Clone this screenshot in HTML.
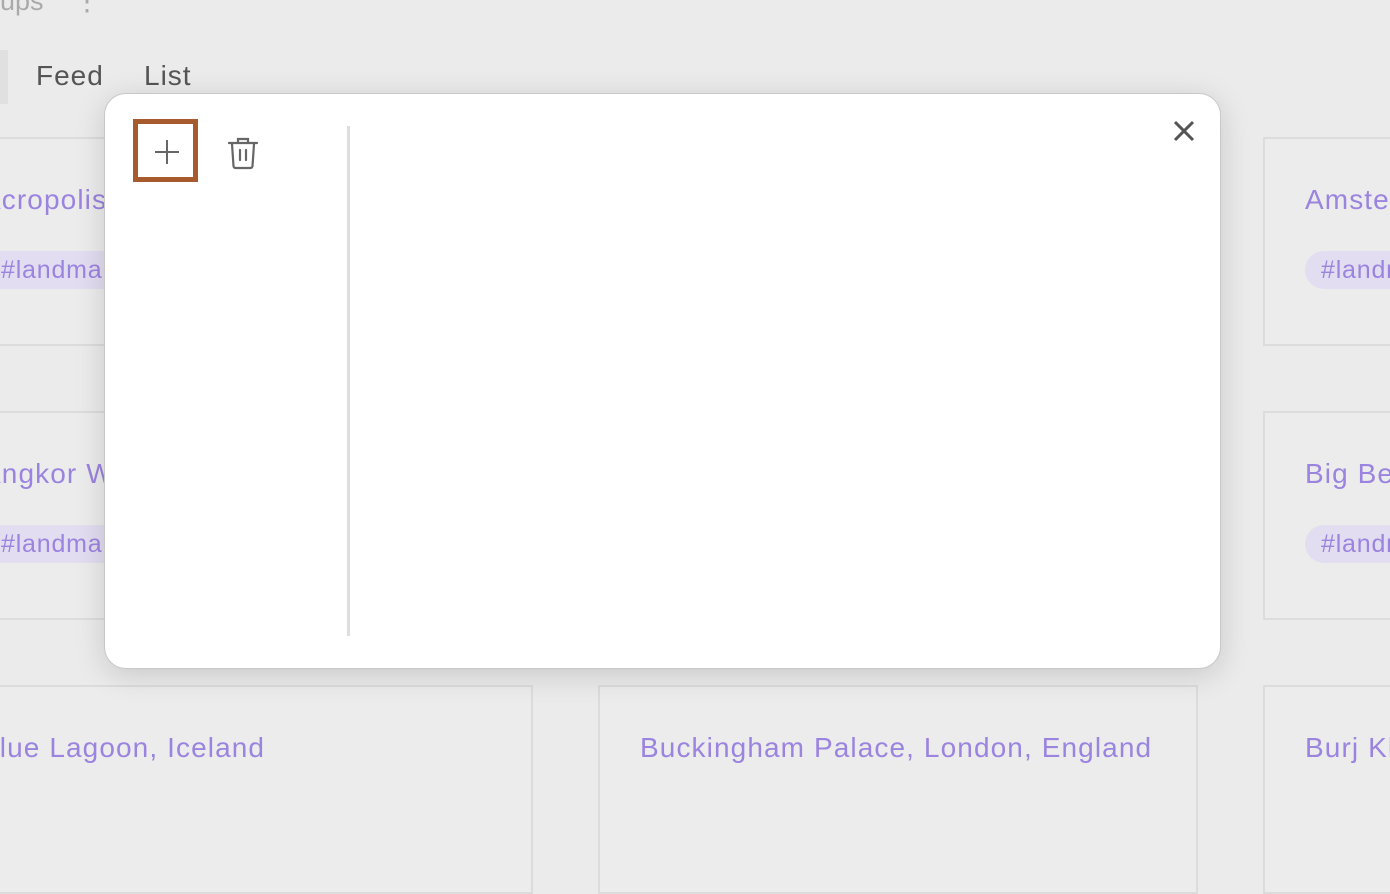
<!DOCTYPE html>
<html><head><style>
body{margin:0;width:1390px;height:768px;overflow:hidden;background:#ebebeb;font-family:"Liberation Sans",sans-serif;position:relative}
.nav{position:absolute;top:60px;font-size:28px;letter-spacing:1px;color:#555}
.tab0{position:absolute;left:0;top:50px;width:8px;height:54px;background:#e0e0e0}
.card{position:absolute;background:#ececec;border:2px solid #dcdcdc;box-sizing:border-box;width:600px;height:209px;overflow:hidden}
.card .t{position:absolute;left:40px;top:45px;font-size:28px;letter-spacing:1.1px;color:#9b83e0;white-space:nowrap}
.card .g{position:absolute;left:40px;top:112px;height:38px;line-height:38px;padding:0 16px;border-radius:19px;background:#e2ddf0;color:#9b83e0;font-size:25px;letter-spacing:0.8px;white-space:nowrap}
.modal{position:absolute;left:104px;top:93px;width:1117px;height:576px;background:#fff;border-radius:22px;border:1px solid #c8c8c8;box-sizing:border-box;box-shadow:0 6px 30px rgba(0,0,0,.15)}
</style></head><body>
<div style="position:absolute;left:0;top:-14px;font-size:27px;color:#aaa">ups&nbsp;&nbsp;&nbsp;&nbsp;⋮</div>
<div class="tab0"></div>
<div class="nav" style="left:36px">Feed</div>
<div class="nav" style="left:144px">List</div>
<div class="card" style="left:-67px;top:137px"><div class="t" style="left:47px">Acropolis, Athens</div><div class="g" style="left:40px;padding-left:26px">#landmark</div></div>
<div class="card" style="left:598px;top:137px"></div>
<div class="card" style="left:1263px;top:137px"><div class="t">Amsterdam</div><div class="g">#landmark</div></div>
<div class="card" style="left:-67px;top:411px"><div class="t" style="left:47px">Angkor Wat</div><div class="g" style="left:40px;padding-left:26px">#landmark</div></div>
<div class="card" style="left:598px;top:411px"></div>
<div class="card" style="left:1263px;top:411px"><div class="t">Big Ben</div><div class="g">#landmark</div></div>
<div class="card" style="left:-67px;top:685px"><div class="t" style="left:45px">Blue Lagoon, Iceland</div></div>
<div class="card" style="left:598px;top:685px"><div class="t">Buckingham Palace, London, England</div></div>
<div class="card" style="left:1263px;top:685px"><div class="t">Burj Khalifa</div></div>
<div class="modal">
 <div style="position:absolute;left:28px;top:25px;width:65px;height:63px;border:5px solid #a65a2e;box-sizing:border-box"></div>
 <svg style="position:absolute;left:49px;top:45px" width="26" height="26" viewBox="0 0 26 26"><path d="M13 1v24M1 13h24" stroke="#666" stroke-width="2"/></svg>
 <svg style="position:absolute;left:122px;top:42px" width="32" height="34" viewBox="0 0 32 34" fill="none" stroke="#666" stroke-width="2.2" stroke-linecap="round"><path d="M2 7h28M11 7V3h10v4M5 8l1.5 22a2 2 0 0 0 2 2h15a2 2 0 0 0 2-2L27 8M13 14v10M19 14v10"/></svg>
 <div style="position:absolute;left:242px;top:32px;width:3px;height:510px;background:#dedede"></div>
 <svg style="position:absolute;left:1068px;top:26px" width="22" height="22" viewBox="0 0 22 22"><path d="M2 2l18 18M20 2L2 20" stroke="#555" stroke-width="3"/></svg>
</div>
</body></html>
